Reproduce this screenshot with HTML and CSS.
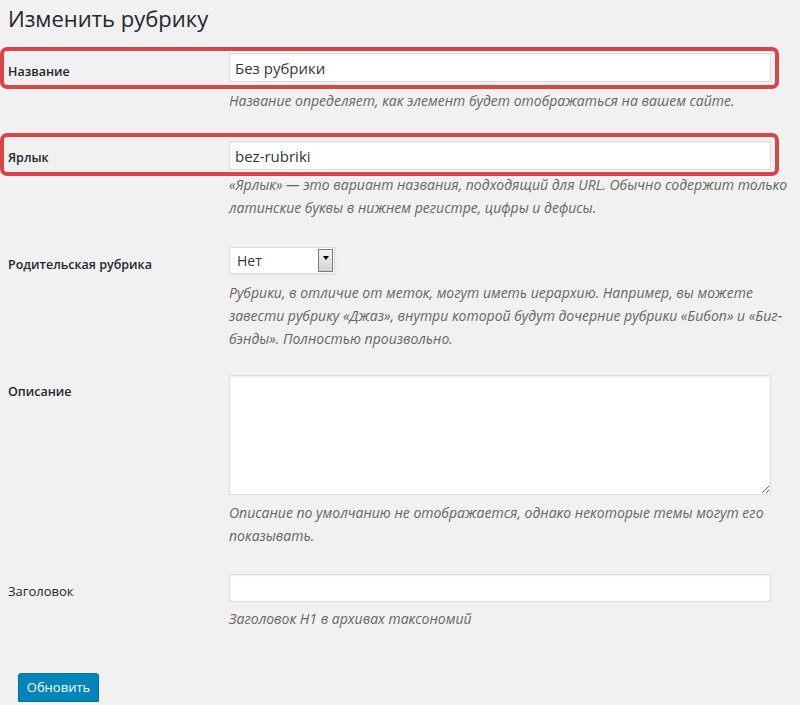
FILE: index.html
```html
<!DOCTYPE html>
<html lang="ru">
<head>
<meta charset="utf-8">
<title>Изменить рубрику</title>
<link rel="stylesheet" href="styles.css">
</head>
<body>
<div class="wrap">
  <h1 class="title">Изменить рубрику</h1>

  <div class="row hl hl-1">
    <label class="lbl lbl-1">Название</label>
    <input class="field" type="text" value="Без рубрики">
  </div>
  <p class="desc">Название определяет, как элемент будет отображаться на вашем сайте.</p>

  <div class="row hl hl-2">
    <label class="lbl lbl-2">Ярлык</label>
    <input class="field" type="text" value="bez-rubriki">
  </div>
  <p class="desc desc-2">«Ярлык» — это вариант названия, подходящий для URL. Обычно содержит только латинские буквы в нижнем регистре, цифры и дефисы.</p>

  <div class="row row-3">
    <label class="lbl lbl-3">Родительская рубрика</label>
    <div class="select">
      <span class="select-val">Нет</span>
      <span class="select-btn"><span class="tri"></span></span>
    </div>
  </div>
  <p class="desc desc-n">Рубрики, в отличие от меток, могут иметь иерархию. Например, вы можете завести рубрику «Джаз», внутри которой будут дочерние рубрики «Бибоп» и «Биг-бэнды». Полностью произвольно.</p>

  <div class="row row-4">
    <label class="lbl lbl-4">Описание</label>
    <textarea class="area"></textarea>
  </div>
  <p class="desc desc-n">Описание по умолчанию не отображается, однако некоторые темы могут его показывать.</p>

  <div class="row row-5">
    <label class="lbl lbl-5">Заголовок</label>
    <input class="field field-5" type="text" value="">
  </div>
  <p class="desc desc-5">Заголовок H1 в архивах таксономий</p>

  <button class="btn" type="button">Обновить</button>
</div>
</body>
</html>
```

FILE: styles.css
```css
html, body {
  margin: 0;
  padding: 0;
  background: #f1f1f1;
}
body {
  font-family: "Open Sans", "Noto Sans", sans-serif;
  color: #23282d;
  font-size: 13px;
}
.wrap {
  padding-left: 8px;
  width: 763px;
}
.title {
  margin: 0;
  padding-top: 3px;
  font-size: 22px;
  line-height: 30px;
  font-weight: 400;
  color: #23282d;
}
.row {
  display: grid;
  grid-template-columns: 221px 542px;
  align-items: start;
}
.hl {
  margin-left: -8px;
  border: 4px solid #d9434a;
  border-radius: 7px;
  padding-left: 4px;
  padding-right: 4px;
  width: 763px;
}
.hl-1 {
  margin-top: 14px;
  padding-top: 2px;
  padding-bottom: 3px;
}
.hl-2 {
  margin-top: 21px;
  padding-top: 4px;
  padding-bottom: 2px;
}
.lbl {
  font-weight: 600;
  font-size: 12.5px;
  line-height: 20px;
  color: #23282d;
}
.lbl-1 { padding-top: 9px; }
.lbl-2 { padding-top: 7px; }
.lbl-3 { padding-top: 8px; }
.lbl-4 { padding-top: 7px; }
.lbl-5 { padding-top: 7px; font-weight: 400; font-size: 13px; }
.field {
  box-sizing: border-box;
  width: 542px;
  height: 29px;
  margin: 0;
  padding: 0 5px;
  border: 1px solid #ddd;
  background: #fff;
  box-shadow: inset 0 1px 2px rgba(0,0,0,0.07);
  font-family: "Open Sans", "Noto Sans", sans-serif;
  font-size: 15px;
  color: #32373c;
  outline: none;
}
.field-5 { height: 28px; }
.desc {
  margin: 0 0 0 221px;
  font-style: italic;
  font-size: 14px;
  line-height: 23px;
  color: #666;
  width: 565px;
}
.desc-2 { margin-top: -3px; }
.desc-n { margin-top: 6px; }
.desc-5 { margin-top: 5px; }
.row-3 { margin-top: 28px; }
.row-4 { margin-top: 25px; }
.row-5 { margin-top: 27px; }
.select {
  box-sizing: border-box;
  width: 106px;
  height: 27px;
  border: 1px solid #ddd;
  background: #fff;
  display: flex;
  align-items: stretch;
  box-shadow: 0 1px 2px rgba(0,0,0,0.07);
}
.select-val {
  flex: 1;
  padding-left: 7px;
  font-size: 14px;
  line-height: 25px;
  color: #32373c;
}
.select-btn {
  width: 15px;
  margin: 1px 1px 1px 0;
  border: 1px solid #7a7a7a;
  background: linear-gradient(#f4f4f4, #d4d4d4);
  display: flex;
  justify-content: center;
  padding-top: 6px;
  box-sizing: border-box;
}
.tri {
  width: 0;
  height: 0;
  border-left: 3.5px solid transparent;
  border-right: 3.5px solid transparent;
  border-top: 4px solid #000;
}
.area {
  box-sizing: border-box;
  width: 542px;
  height: 120px;
  margin: 0;
  border: 1px solid #ddd;
  background: #fff;
  box-shadow: inset 0 1px 2px rgba(0,0,0,0.07);
  resize: both;
  outline: none;
}
.btn {
  display: block;
  margin: 43px 0 0 10px;
  box-sizing: border-box;
  width: 81px;
  height: 29px;
  padding: 0;
  border: 1px solid #0073aa;
  border-radius: 3px;
  background: #0085ba;
  box-shadow: 0 1px 0 #006799;
  color: #fff;
  font-family: "Open Sans", "Noto Sans", sans-serif;
  font-size: 13px;
  line-height: 27px;
}
```
